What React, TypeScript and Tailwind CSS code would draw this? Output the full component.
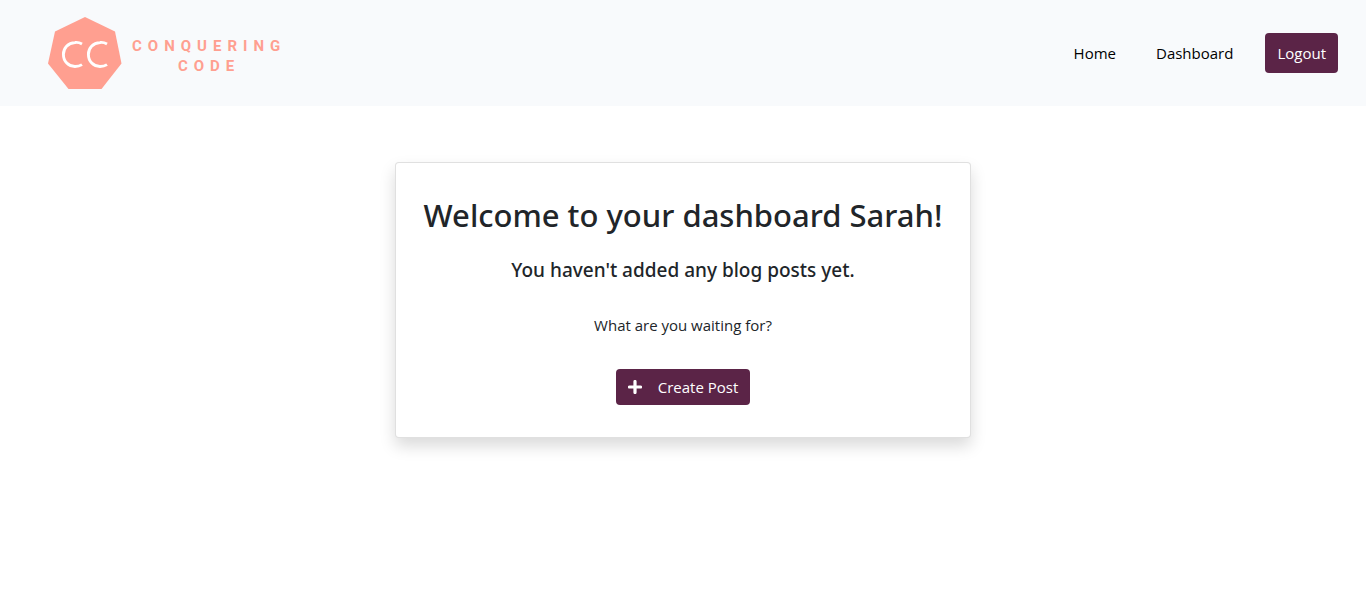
import React from "react";

function Logo() {
  return (
    <a href="#home" aria-label="Conquering Code" className="flex items-center gap-2.5 text-[#ff9f90]">
      <svg viewBox="0 0 74 74" className="size-[74px]" aria-hidden="true">
        <polygon points="37,1 67,15.5 73.5,47.5 53.500,73 20.500,73 0,47.500 7,15.500" fill="currentColor" />
        <g fill="none" stroke="#ffffff" strokeWidth="2.9">
          <path d="M34 28 C31 26.3 28.8 26.2 27 26.5 C20 27 15.4 32 15.4 38.3 C15.4 45.500 20.500 50.500 27 50.500 C29.600 50.500 31.700 50.100 34 48.600" />
          <path d="M59 28 C56 26.3 53.8 26.2 52 26.5 C45 27 40.400 32 40.400 38.300 C40.400 45.500 45.500 50.500 52 50.500 C54.600 50.500 56.700 50.100 59 48.600" />
        </g>
      </svg>
      <span className="pt-1.5 text-center font-['Roboto',sans-serif] text-[15px] leading-5 font-bold tracking-[6px]">
        CONQUERING
        <br />
        CODE
      </span>
    </a>
  );
}

export default function App() {
  return (
    <div className="font-['Open_Sans','Noto_Sans',sans-serif] text-[15px] leading-6 text-[#212529]">
      <header className="flex items-center justify-between bg-[#f8fafc] py-4 pr-7 pl-12">
        <Logo />
        <nav className="flex items-center text-black">
          <a href="#home" className="px-5 py-2">Home</a>
          <a href="#dashboard" className="px-5 py-2">Dashboard</a>
          <button type="button" className="ml-3 rounded bg-[#5b2447] px-3 py-2 text-white">Logout</button>
        </nav>
      </header>
      <main className="flex justify-center px-4 py-14">
        <section className="flex w-full max-w-xl flex-col items-center rounded border border-black/12 bg-white px-4 py-8 text-center shadow-[0_8px_16px_rgba(0,0,0,0.15)]">
          <h1 className="font-['Noto_Sans',sans-serif] text-[31px] leading-10 font-medium">Welcome to your dashboard Sarah!</h1>
          <h2 className="mt-5 font-['Noto_Sans',sans-serif] text-[19px] leading-[30px] font-medium">You haven't added any blog posts yet.</h2>
          <p className="mt-7">What are you waiting for?</p>
          <button type="button" className="mt-8 flex h-9 items-center gap-4 rounded bg-[#5b2447] px-3 text-white">
            <svg viewBox="0 0 14 14" className="size-3.5" aria-hidden="true">
              <path d="M7 1.500V12.500M1.500 7H12.500" stroke="currentColor" strokeWidth="3.2" strokeLinecap="round" />
            </svg>
            Create Post
          </button>
        </section>
      </main>
    </div>
  );
}
